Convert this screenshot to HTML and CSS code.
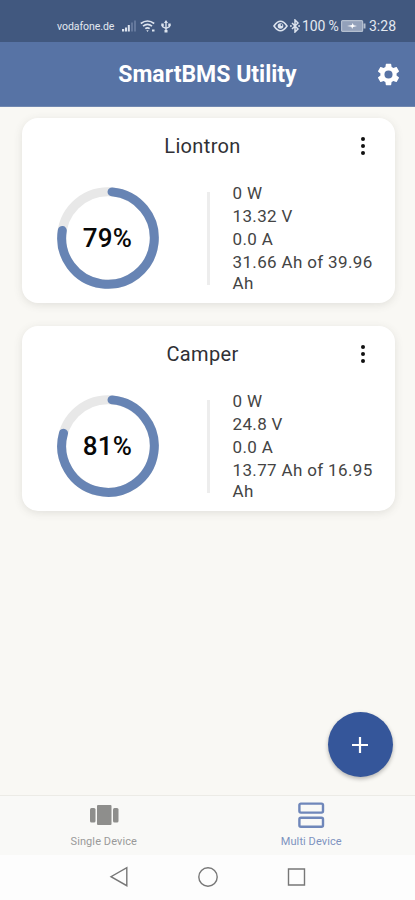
FILE: index.html
```html
<!DOCTYPE html>
<html lang="en">
<head>
<meta charset="utf-8">
<title>SmartBMS Utility</title>
<link rel="stylesheet" href="styles.css">
</head>
<body>
<div class="app">
  <div class="status">
    <span class="carrier">vodafone.de</span>
    <svg class="signal" width="15" height="12" viewBox="0 0 15 12"><path d="M0 9h2.200v2.500H0zM3 7.500h2v4H3zM5.800 5h2v6.500h-2z" fill="#dce3ee"/><path d="M9 2.500h2v9H9zM12 .5h2v11h-2z" fill="#64789c"/></svg>
    <svg class="wifi" width="16" height="13" viewBox="0 0 16 13" fill="none" stroke="#dce3ee" stroke-width="1.700"><path d="M.8 3.500Q7.500-1.500 14.200 3.500M3 6.200q4.500-3.500 9 0M5.300 8.700q2.200-1.700 4.400 0"/><path d="M6.300 10.200h2.400L7.500 12zM12 9.500h2.500v2H12z" fill="#dce3ee" stroke="none"/></svg>
    <svg class="usb" width="10" height="13" viewBox="0 0 10 13" fill="none" stroke="#dce3ee" stroke-width="1.400"><path d="M5 1.500v9M1.500 4.500v2L5 8.500l3.500-2v-2"/><path d="M5 0l2 3H3zM3.500 10h3v2.500h-3zM.3 3.500h2.400V6H.3zM7.300 3.500h2.400V6H7.300z" fill="#dce3ee" stroke="none"/></svg>
    <span class="gap"></span>
    <svg class="eye" width="15" height="12" viewBox="0 0 15 12" fill="none" stroke="#dce3ee" stroke-width="1.600"><path d="M1 6Q7.500-3.500 14 6Q7.500 15.500 1 6z"/><circle cx="7.500" cy="6" r="2.800" fill="#dce3ee" stroke="none"/><circle cx="8.500" cy="5" r=".9" fill="#41587f" stroke="none"/></svg>
    <svg class="bt" width="10" height="14" viewBox="0 0 10 14" fill="none" stroke="#dce3ee" stroke-width="1.500"><path d="M2 4l6 6-3 3V1l3 3-6 6"/><path d="M0 7h1.800M8.200 7H10"/></svg>
    <span class="percent">100 %</span>
    <svg class="battery" width="25" height="12" viewBox="0 0 25 12"><rect x=".6" y=".6" width="21" height="10.800" rx="1" fill="#93a1ba" stroke="#b4bfcf" stroke-width="1.200"/><path d="M22.500 3.500h2v5h-2z" fill="#b4bfcf"/><path d="M6 6l5-1 .5-2 1.200 2.200L16 6l-4 1-.8 2-.8-2.200z" fill="#fff"/></svg>
    <span class="clock">3:28</span>
  </div>
  <header class="bar">
    <h1>SmartBMS Utility</h1>
    <svg class="gear" width="27" height="27" viewBox="0 0 24 24"><path fill="#fff" d="M19.140 12.940c.04-.3.060-.61.060-.94s-.02-.64-.07-.94l2.030-1.580c.18-.14.230-.41.120-.61l-1.920-3.320c-.12-.22-.37-.29-.59-.22l-2.390.96c-.5-.38-1.030-.7-1.620-.94L14.400 2.810c-.04-.24-.24-.41-.48-.41h-3.840c-.24 0-.43.170-.47.410l-.36 2.540c-.59.240-1.130.57-1.620.94l-2.390-.96c-.22-.08-.47 0-.59.220L2.740 8.870c-.12.210-.08.470.12.610l2.030 1.580c-.05.300-.09.630-.09.940s.02.640.07.940l-2.030 1.580c-.18.140-.23.410-.12.610l1.920 3.320c.12.220.37.290.59.220l2.390-.96c.5.380 1.030.7 1.620.94l.36 2.540c.05.240.24.410.48.410h3.840c.24 0 .44-.17.470-.41l.36-2.540c.59-.24 1.130-.56 1.620-.94l2.390.96c.22.080.47 0 .59-.22l1.920-3.320c.12-.22.070-.47-.12-.61zM12 15.600a3.600 3.600 0 1 1 0-7.200 3.600 3.600 0 0 1 0 7.200z"/></svg>
  </header>
  <main>
    <section class="card">
      <div class="head"><h2>Liontron</h2><span class="more"><i></i><i></i><i></i></span></div>
      <div class="body">
        <div class="gauge">
          <svg width="102" height="102" viewBox="-51 -51 102 102" fill="none" stroke-width="9"><circle r="46.300" stroke="#e8e8e8"/><path d="M4.050-46.120A46.300 46.300 0 1 1-45.700-7.500" stroke="#6784b4" stroke-linecap="round"/></svg>
          <b>79%</b>
        </div>
        <div class="rule"></div>
        <ul><li>0 W</li><li>13.32 V</li><li>0.0 A</li><li>31.66 Ah of 39.96 Ah</li></ul>
      </div>
    </section>
    <section class="card">
      <div class="head"><h2>Camper</h2><span class="more"><i></i><i></i><i></i></span></div>
      <div class="body">
        <div class="gauge">
          <svg width="102" height="102" viewBox="-51 -51 102 102" fill="none" stroke-width="9"><circle r="46.300" stroke="#e8e8e8"/><path d="M4.050-46.120A46.300 46.300 0 1 1-44.500-12.800" stroke="#6784b4" stroke-linecap="round"/></svg>
          <b>81%</b>
        </div>
        <div class="rule"></div>
        <ul><li>0 W</li><li>24.8 V</li><li>0.0 A</li><li>13.77 Ah of 16.95 Ah</li></ul>
      </div>
    </section>
    <button class="fab" aria-label="Add"><svg width="18" height="18" viewBox="0 0 18 18"><path d="M9 1v16M1 9h16" stroke="#fff" stroke-width="2.200"/></svg></button>
  </main>
  <nav class="tabs">
    <div class="tab"><svg width="30" height="22" viewBox="0 0 30 22" fill="#8e8e8c"><rect x="1" y="4" width="5.500" height="14.500" rx="1.500"/><rect x="8" y="1" width="14.500" height="20" rx="1"/><rect x="24" y="4" width="5.500" height="14.500" rx="1.500"/></svg><span>Single Device</span></div>
    <div class="tab active"><svg width="28" height="28" viewBox="0 0 28 28" fill="none" stroke="#6f87ba" stroke-width="2.400"><rect x="2.400" y="2.600" width="23.600" height="9" rx="1.500"/><rect x="2.400" y="16.800" width="23.600" height="9" rx="1.500"/></svg><span>Multi Device</span></div>
  </nav>
  <div class="sys">
    <svg width="20" height="22" viewBox="0 0 20 22"><path d="M17.800 1.700v18L2 10.700z"/></svg>
    <svg width="22" height="22" viewBox="0 0 22 22"><circle cx="11" cy="11" r="9.200"/></svg>
    <svg width="20" height="20" viewBox="0 0 20 20"><path d="M1.500 2h16v16h-16z"/></svg>
  </div>
</div>
</body>
</html>
```
FILE: styles.css
```css
* { box-sizing: border-box; }
body { margin: 0; font-family: Roboto, "Liberation Sans", sans-serif; color: #222; }
h1, h2, ul { margin: 0; padding: 0; font-weight: 400; }
svg { display: block; flex: none; }
.app { width: 415px; height: 900px; display: flex; flex-direction: column; background: #f9f8f4; overflow: hidden; }

.status { height: 42px; background: #41587f; color: #e3e8f0; display: flex; align-items: center; padding: 10px 18px 0 57px; white-space: nowrap; }
.carrier { font-size: 10.500px; width: 65px; letter-spacing: -.05px; }
.wifi { margin-left: 3px; }
.usb { margin-left: 5px; }
.gap { flex: 1; }
.bt { margin-left: 2px; }
.percent { font-size: 14px; margin-left: 2px; width: 38px; letter-spacing: -.15px; }
.battery { margin-left: 1px; }
.clock { font-size: 14px; margin-left: 3px; width: 28px; }

.bar { height: 65px; background: #5773a5; color: #fff; display: grid; grid-template-columns: 54px 1fr 54px; align-items: center; border-bottom: 1px solid #7188b0; }
h1 { grid-column: 2; text-align: center; font-size: 23px; font-weight: 700; white-space: nowrap; line-height: 28px; padding-top: 1px; }
.gear { margin-top: 1px; justify-self: center; }

main { flex: 1; position: relative; padding: 11px 20.500px 0 21.500px; display: flex; flex-direction: column; gap: 23px; }
.card { height: 185px; background: #fff; border-radius: 16px; box-shadow: 0 2px 9px rgba(70, 70, 60, .13); }
.head { height: 56px; display: grid; grid-template-columns: 50px 1fr 61px; align-items: center; }
h2 { grid-column: 2; text-align: center; font-size: 20px; line-height: 24px; letter-spacing: .35px; color: #303035; }
.more { justify-self: center; display: flex; flex-direction: column; gap: 3px; padding-right: 3px; }
.more i { width: 4px; height: 4px; border-radius: 50%; background: #111; }
.body { display: flex; padding-top: 9px; }
.gauge { width: 102px; height: 102px; margin: 4px 48px 0 35px; display: grid; place-items: center; }
.gauge > * { grid-area: 1 / 1; }
.gauge b { font-size: 26px; line-height: 30px; font-weight: 500; color: #080808; letter-spacing: .2px; }
.rule { width: 3px; height: 93px; background: #ededed; margin-top: 9px; }
ul { list-style: none; margin-left: 23px; width: 152px; font-size: 17px; line-height: 21px; letter-spacing: .35px; color: #444; }
li { margin-bottom: 2px; }

.fab { position: absolute; right: 22.500px; bottom: 18px; width: 65px; height: 65px; border: 0; border-radius: 50%; padding: 0; background: #35569a; display: grid; place-items: center; box-shadow: 0 2px 4px rgba(0, 0, 0, .28); }

.tabs { height: 60px; background: #f9f9f7; border-top: 1px solid #ecebe6; display: flex; }
.tab { flex: 1; display: flex; flex-direction: column; align-items: center; color: #999; font-size: 11px; letter-spacing: .08px; padding-top: 8px; }
.tab span { line-height: 14px; margin-top: 9px; }
.tab.active { color: #7e93c0; padding-top: 5px; }
.tab.active span { margin-top: 6px; }
.sys { height: 45px; padding-bottom: 1px; background: #fdfdfd; display: flex; align-items: center; justify-content: center; gap: 68px; fill: none; stroke: #777; stroke-width: 1.400; }
```
